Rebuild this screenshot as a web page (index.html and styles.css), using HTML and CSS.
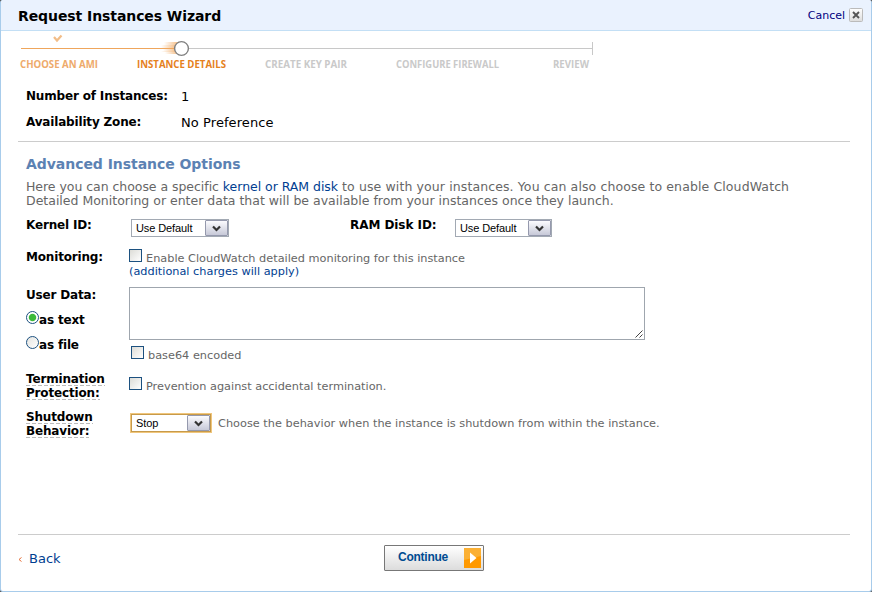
FILE: index.html
```html
<!DOCTYPE html>
<html lang="en">
<head>
<meta charset="utf-8">
<title>Request Instances Wizard</title>
<link rel="stylesheet" href="styles.css">
</head>
<body>
<main class="dialog">
  <header class="titlebar">
    <h1>Request Instances Wizard</h1>
    <a class="cancel"><span>Cancel</span>
      <svg width="14" height="14" viewBox="0 0 14 14"><defs><linearGradient id="g" x1="0" y1="0" x2="0" y2="1"><stop offset="0" stop-color="#fff"/><stop offset="1" stop-color="#ddd"/></linearGradient></defs><rect x=".5" y=".5" width="13" height="13" rx="1" fill="url(#g)" stroke="#bbb"/><path d="M4 4l6 6M10 4l-6 6" stroke="#555" stroke-width="1.9"/></svg>
    </a>
  </header>

  <svg class="steps" width="600" height="44" viewBox="0 0 600 44">
    <defs><linearGradient id="trail"><stop offset="0" stop-color="#f0a050" stop-opacity="0"/><stop offset="1" stop-color="#f0a050" stop-opacity=".7"/></linearGradient></defs>
    <path d="M36 6l3 3.500 4.500-5" fill="none" stroke="#f2bd88" stroke-width="2.200"/>
    <path d="M3 17.500H160" stroke="#efa65c"/>
    <path d="M165 17.500H574.500M574.500 11V24" stroke="#c8c8c8" fill="none"/>
    <rect x="146" y="11" width="14" height="3" fill="url(#trail)"/>
    <rect x="143" y="14" width="15" height="3" fill="url(#trail)"/>
    <rect x="145" y="18" width="13" height="2" fill="url(#trail)"/>
    <rect x="143" y="20" width="15" height="1" fill="url(#trail)"/>
    <rect x="147" y="21" width="13" height="2" fill="url(#trail)"/>
    <circle cx="163.500" cy="17.500" r="6.900" fill="#fff" stroke="#808080" stroke-width="1.400"/>
    <g class="step-names">
      <text class="done" x="2" y="37" textLength="78" lengthAdjust="spacingAndGlyphs">CHOOSE AN AMI</text>
      <text class="current" x="119" y="37" textLength="89" lengthAdjust="spacingAndGlyphs">INSTANCE DETAILS</text>
      <text x="247" y="37" textLength="82" lengthAdjust="spacingAndGlyphs">CREATE KEY PAIR</text>
      <text x="378" y="37" textLength="103" lengthAdjust="spacingAndGlyphs">CONFIGURE FIREWALL</text>
      <text x="535" y="37" textLength="36" lengthAdjust="spacingAndGlyphs">REVIEW</text>
    </g>
  </svg>

  <section class="summary">
    <div class="field"><b class="number">Number of Instances:</b><span>1</span></div>
    <div class="field"><b class="zone">Availability Zone:</b><span class="pref">No Preference</span></div>
  </section>

  <section class="options">
    <h2>Advanced Instance Options</h2>
    <p class="intro"><span class="l1">Here you can choose a specific <a>kernel or RAM disk</a></span><span class="l1-rest"> to use with your instances. You can also choose to enable CloudWatch</span><br><span class="l2">Detailed Monitoring or enter data that will be available from your instances once they launch.</span></p>

    <div class="row kernel">
      <b>Kernel ID:</b>
      <div class="select"><span>Use Default</span><i><svg width="9" height="7" viewBox="0 0 9 7"><path d="M1 1.500l3.500 3.500L8 1.500" fill="none" stroke="#333" stroke-width="2.200"/></svg></i></div>
      <b class="ram">RAM Disk ID:</b>
      <div class="select narrow"><span>Use Default</span><i><svg width="9" height="7" viewBox="0 0 9 7"><path d="M1 1.500l3.500 3.500L8 1.500" fill="none" stroke="#333" stroke-width="2.200"/></svg></i></div>
    </div>

    <div class="row monitoring">
      <b>Monitoring:</b>
      <div class="hint"><i class="check"></i><span class="enable">Enable CloudWatch detailed monitoring for this instance</span><br><a class="charges">(additional charges will apply)</a></div>
    </div>

    <div class="row userdata">
      <div class="modes">
        <b>User Data:</b>
        <div class="mode"><i class="radio on"></i><b>as text</b></div>
        <div class="mode"><i class="radio"></i><b>as file</b></div>
      </div>
      <div class="data">
        <div class="textarea"><svg width="8" height="8" viewBox="0 0 8 8"><path d="M.5 7.500l7-7M4.500 7.500l3-3" stroke="#444" fill="none"/></svg></div>
        <div class="hint encoded"><i class="check"></i><span>base64 encoded</span></div>
      </div>
    </div>

    <div class="row termination">
      <b><u>Termination</u><br><u>Protection:</u></b>
      <div class="hint"><i class="check"></i><span class="prevent">Prevention against accidental termination.</span></div>
    </div>

    <div class="row shutdown">
      <b><u>Shutdown</u><br><u>Behavior:</u></b>
      <div class="select focus"><span>Stop</span><i><svg width="9" height="7" viewBox="0 0 9 7"><path d="M1 1.500l3.500 3.500L8 1.500" fill="none" stroke="#333" stroke-width="2.200"/></svg></i></div>
      <span class="behavior">Choose the behavior when the instance is shutdown from within the instance.</span>
    </div>
  </section>

  <footer>
    <a class="back"><svg width="4" height="5" viewBox="0 0 4 5"><path d="M3.500 .5l-2.500 2 2.500 2" fill="none" stroke="#e5703a"/></svg><span>Back</span></a>
    <button class="continue"><span>Continue</span><svg width="17" height="20" viewBox="0 0 17 20"><path fill="#f90" d="M0 0h17v20H0z"/><path fill="#fbb034" d="M0 0h17v8L0 12z"/><path fill="#fff" d="M6 4.500v11l6.500-5.500z"/></svg></button>
  </footer>
</main>
</body>
</html>
```
FILE: styles.css
```css
* { box-sizing: border-box; }
body { margin: 0; background: #555; font: 13px/14px "DejaVu Sans", sans-serif; color: #000; }
h1, h2, p { margin: 0; }
span, b, a, h1, h2 { white-space: nowrap; }
svg { display: block; flex: none; }
a { color: #003e91; }
b { font-size: 12px; letter-spacing: -.17px; }

.dialog { width: 872px; height: 592px; display: flex; flex-direction: column; background: #fff; border: 1px solid #a8cceb; border-top: 0; border-radius: 3px; overflow: hidden; }
.titlebar { height: 31px; flex: none; display: flex; justify-content: space-between; padding: 8px 8px 0 17px; background: #eaf2fe; border-bottom: 1px solid #c3dff5; }
h1 { font-size: 14px; line-height: 16px; letter-spacing: -.08px; }
.cancel { display: flex; gap: 4px; font-size: 11px; line-height: 15px; color: #000080; }

.steps { margin: 0 0 0 17px; }
.step-names { font: bold 10px "Open Sans", sans-serif; fill: #c9c9c9; }
.done { fill: #eeaa6b; }
.current { fill: #e5811d; }

.summary { margin: 0 21px 0 17px; padding: 14px 0 0 8px; height: 67px; flex: none; border-bottom: 1px solid #ccc; }
.field { display: flex; height: 26px; }
.field b { width: 155px; flex: none; }
.field span { padding-top: 1px; }
.pref { letter-spacing: .08px; }

.options { padding: 14px 0 0 25px; flex: 1; }
h2 { font-size: 14px; line-height: 16px; letter-spacing: -.05px; color: #5c82b3; }
.intro { margin-top: 8px; font-size: 12.500px; color: #666; }
.l1 { letter-spacing: -.04px; }
.l1-rest { letter-spacing: .11px; }

.row { display: flex; align-items: flex-start; }
.row > b, .modes { width: 103px; flex: none; }
.kernel { height: 32px; padding-top: 10px; }
.select { display: flex; width: 98px; height: 18px; margin: 1px 0 0 2px; border: 1px solid #a2a9b3; font: 11px/16px "Liberation Sans", sans-serif; letter-spacing: -.1px; background: #fff; justify-content: space-between; padding-left: 4px; flex: none; }
.select i { width: 23px; border: 1px solid #9599ad; border-radius: 1px; background: linear-gradient(#fbfbfe, #c7c9d8); display: flex; align-items: center; justify-content: center; }
.select.narrow { width: 97px; }
.row > .ram { width: 103px; margin-left: 121px; letter-spacing: -.06px; }

.hint, .behavior { color: #666; font-size: 11.300px; line-height: 13px; }
.check { display: inline-block; width: 13px; height: 13px; border: 1px solid #1c5180; background: linear-gradient(135deg, #dcdcd7, #fff); vertical-align: top; margin-right: 4px; }
.hint span { display: inline-block; padding-top: 3px; }
.monitoring { height: 38px; margin-top: 10px; }
.monitoring .hint { margin-top: -1px; }

.userdata { height: 84px; }
.data { margin-top: -1px; }
.mode { display: flex; margin-top: 9px; height: 16px; }
.mode b { padding-top: 2px; }
.radio { width: 13px; height: 13px; border: 1px solid #1c5180; border-radius: 50%; background: linear-gradient(135deg, #e4e4e0, #fff); }
.radio.on { background: radial-gradient(circle at 50% 50%, #3cb93a 0 3.200px, #fff 4.200px); }
.textarea { width: 516px; height: 53px; border: 1px solid #9fa6ae; display: flex; align-items: flex-end; justify-content: flex-end; padding: 1px; }
.encoded { padding: 6px 0 0 2px; }

.termination { height: 38px; }
.termination .hint { padding-top: 5px; }
u { text-decoration: none; background: repeating-linear-gradient(90deg, #bbb 0 4px, transparent 4px 6px) left bottom / 100% 1px no-repeat; }
.shutdown .select { width: 80px; margin-top: 4px; }
.behavior { padding-top: 7px; margin-left: 7px; letter-spacing: .01px; }
.focus { border-color: #c79a4a; box-shadow: 0 0 0 1px #f0c67c; }

footer { margin: 0 21px 0 17px; height: 57px; flex: none; border-top: 1px solid #ccc; display: flex; align-items: flex-start; }
.back { display: flex; align-items: center; gap: 7px; width: 366px; padding-top: 17px; }
.continue { width: 100px; height: 26px; margin-top: 10px; border: 1px solid #777; border-radius: 1px; padding: 0 2px 0 13px; background: linear-gradient(#fff, #dcdcdc); display: flex; justify-content: space-between; align-items: center; font: bold 12px "Liberation Sans", sans-serif; letter-spacing: -.25px; color: #004b91; }
.continue span { padding-bottom: 2px; }
```
